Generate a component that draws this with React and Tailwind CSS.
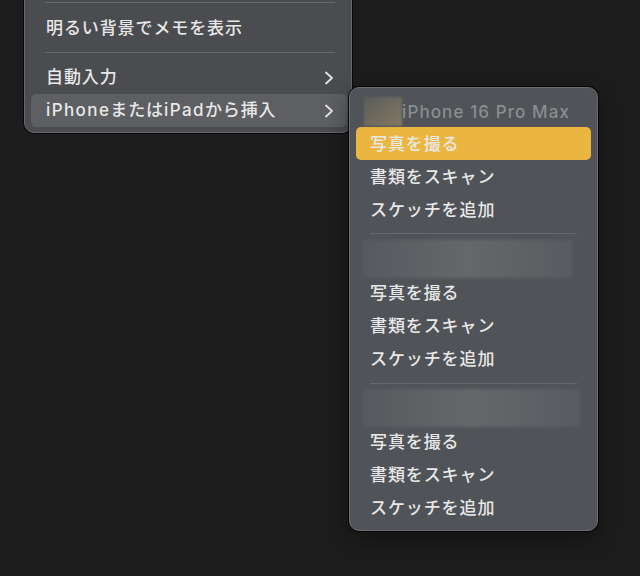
import React from 'react';

const font = { fontFamily: '"Inter", "Noto Sans CJK JP", sans-serif' };

function Chevron() {
    return (
        <svg width="10" height="14" viewBox="0 0 10 14">
            <polyline points="2,1.5 8,7 2,12.5" fill="none" stroke="#e4e4e4" strokeWidth="1.8" strokeLinecap="round" strokeLinejoin="round" />
        </svg>
    );
}

function Sep({ className }) {
    return <div className={`h-px bg-[#66686c] ${className}`} />;
}

// 端末ごとの項目
const actions = ['写真を撮る', '書類をスキャン', 'スケッチを追加'];

function DeviceGroup({ active }) {
    return (
        <div className="flex flex-col">
            {actions.map((label, i) => (
                <div
                    key={label}
                    className={`h-[33px] flex items-center px-[14px] pt-[2px] rounded-[5px] ${active && i === 0 ? 'bg-[#ebb63f]' : ''}`}
                >
                    <span className="text-[17px] tracking-[0.9px] font-medium text-[#e8e8e8]">{label}</span>
                </div>
            ))}
        </div>
    );
}

function BlurBlock({ w }) {
    return (
        <div className="h-[36px] flex items-start pl-[6px]">
            <div className={`${w} h-[38px] blur-[1.5px] bg-gradient-to-r from-[#56595d] via-[#65686b] to-[#585b5f]`} />
        </div>
    );
}

export default function App() {
    return (
        <div className="w-[640px] h-[576px] bg-[#1d1d1d] relative overflow-hidden" style={font}>
            {/* 左のメニュー */}
            <div className="ml-[24px] -mt-[14px] w-[328px] bg-[#4a4c50] border border-[#66686b] rounded-b-[10px] shadow-[0_0_0_1px_rgba(0,0,0,0.7)] pl-[6px] pr-[4px] pt-[15px] pb-[5px] flex flex-col">
                <Sep className="ml-[14px] mr-[12px]" />
                <div className="h-[42px] flex items-center px-[15px] pt-[10px]">
                    <span className="text-[17px] tracking-[0.9px] font-medium text-[#e8e8e8]">明るい背景でメモを表示</span>
                </div>
                <div className="pt-[7px] pb-[8px]"><Sep className="ml-[14px] mr-[12px]" /></div>
                <div className="h-[33px] flex items-center justify-between pl-[15px] pr-[13px] pt-[1px]">
                    <span className="text-[17px] tracking-[0.9px] font-medium text-[#e8e8e8]">自動入力</span>
                    <Chevron />
                </div>
                <div className="h-[33px] flex items-center justify-between pl-[15px] pr-[13px] rounded-[5px] bg-[#5d5f63]">
                    <span className="text-[17px] font-medium text-[#e8e8e8]">
                        <span className="tracking-[1.4px]">iPhone</span>
                        <span className="tracking-[0.9px]">または</span>
                        <span className="tracking-[1.4px]">iPad</span>
                        <span className="tracking-[0.9px]">から挿入</span>
                    </span>
                    <Chevron />
                </div>
            </div>

            {/* サブメニュー */}
            <div className="absolute left-[349px] top-[87px] w-[249px] bg-[#505357] border border-[#6b6d70] rounded-[10px] shadow-[0_0_0_1px_rgba(0,0,0,0.75),0_8px_24px_rgba(0,0,0,0.4)] px-[6px] pt-[10px] pb-[6px] flex flex-col">
                <div className="h-[29px] flex items-start pl-[8px]">
                    <div className="w-[38px] h-[29px] -mt-[1px] blur-[1px] bg-gradient-to-br from-[#5b5c5b] via-[#6e6a5f] to-[#857a62]" />
                    <span className="text-[17px] font-medium text-[#8c8d90] leading-[29px] tracking-[1.1px]">iPhone 16 Pro Max</span>
                </div>
                <DeviceGroup active />
                <div className="pt-[7px] pb-[6px]"><Sep className="mx-[14px]" /></div>
                <BlurBlock w="w-[210px]" />
                <DeviceGroup />
                <div className="pt-[8px] pb-[5px]"><Sep className="mx-[14px]" /></div>
                <BlurBlock w="w-[218px]" />
                <DeviceGroup />
            </div>
        </div>
    );
}
